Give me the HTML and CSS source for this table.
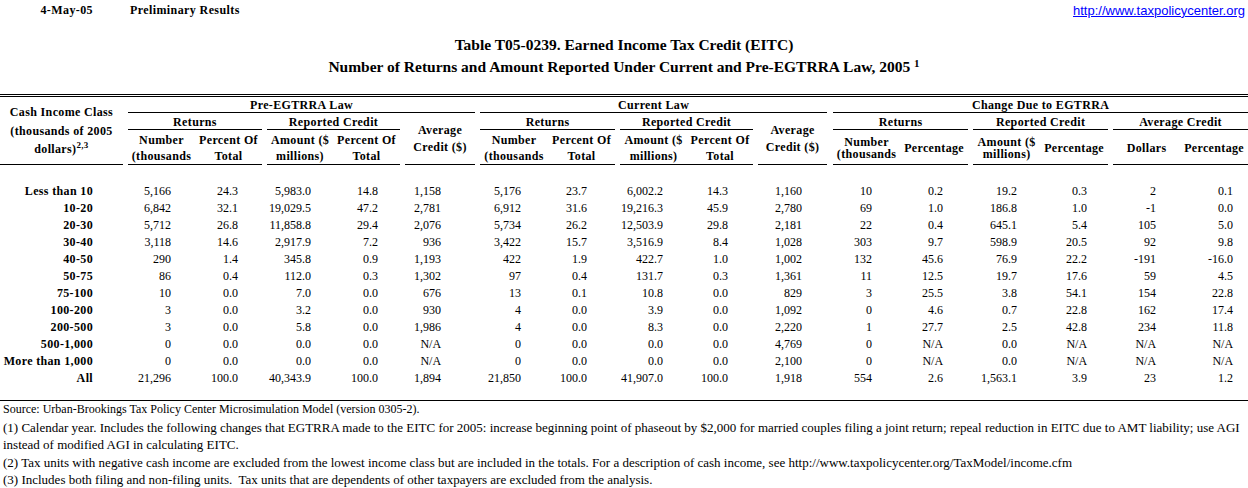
FILE: index.html
```html
<!DOCTYPE html>
<html lang="en">
<head>
<meta charset="utf-8">
<title>Table T05-0239. Earned Income Tax Credit (EITC)</title>
<link rel="stylesheet" href="styles.css">
</head>
<body>
<div class="topbar">
  <span class="date">4-May-05</span>
  <span class="status">Preliminary Results</span>
  <a class="site" href="#">http://www.taxpolicycenter.org</a>
</div>
<div class="title">
  <div>Table T05-0239. Earned Income Tax Credit (EITC)</div>
  <div>Number of Returns and Amount Reported Under Current and Pre-EGTRRA Law, 2005 <sup>1</sup></div>
</div>
<div class="table-wrap">
<table class="data">
  <colgroup>
    <col class="c-a"><col class="c-b"><col class="c-c"><col class="c-d"><col class="c-e"><col class="c-f">
    <col class="c-g"><col class="c-h"><col class="c-i"><col class="c-j"><col class="c-k">
    <col class="c-l"><col class="c-m"><col class="c-n"><col class="c-o"><col class="c-p"><col class="c-q">
  </colgroup>
  <thead>
    <tr class="hr1">
      <th rowspan="3" class="ul label-head">Cash Income Class<br>(thousands of 2005<br>dollars)<sup>2,3</sup></th>
      <th colspan="5" class="ul gap">Pre-EGTRRA Law</th>
      <th colspan="5" class="ul gap">Current Law</th>
      <th colspan="6" class="ul gap6">Change Due to EGTRRA</th>
    </tr>
    <tr class="hr2">
      <th colspan="2" class="ul gap">Returns</th>
      <th colspan="2" class="ul gap">Reported Credit</th>
      <th rowspan="2" class="ul gap avg">Average<br>Credit ($)</th>
      <th colspan="2" class="ul gap">Returns</th>
      <th colspan="2" class="ul gap">Reported Credit</th>
      <th rowspan="2" class="ul gap avg">Average<br>Credit ($)</th>
      <th colspan="2" class="ul gap6">Returns</th>
      <th colspan="2" class="ul gap">Reported Credit</th>
      <th colspan="2" class="ul gap">Average Credit</th>
    </tr>
    <tr class="hr3">
      <th class="ul gap">Number<br>(thousands</th>
      <th class="ul">Percent Of<br>Total</th>
      <th class="ul gap">Amount ($<br>millions)</th>
      <th class="ul">Percent Of<br>Total</th>
      <th class="ul gap">Number<br>(thousands</th>
      <th class="ul">Percent Of<br>Total</th>
      <th class="ul gap">Amount ($<br>millions)</th>
      <th class="ul">Percent Of<br>Total</th>
      <th class="ul gap6 tight">Number<br>(thousands</th>
      <th class="ul tight">Percentage</th>
      <th class="ul gap tight">Amount ($<br>millions)</th>
      <th class="ul tight">Percentage</th>
      <th class="ul gap tight">Dollars</th>
      <th class="ul tight">Percentage</th>
    </tr>
  </thead>
  <tbody>
    <tr class="blank"><td colspan="17"></td></tr>
    <tr><th>Less than 10</th><td>5,166</td><td>24.3</td><td>5,983.0</td><td>14.8</td><td>1,158</td><td>5,176</td><td>23.7</td><td>6,002.2</td><td>14.3</td><td>1,160</td><td>10</td><td>0.2</td><td>19.2</td><td>0.3</td><td>2</td><td>0.1</td></tr>
    <tr><th>10-20</th><td>6,842</td><td>32.1</td><td>19,029.5</td><td>47.2</td><td>2,781</td><td>6,912</td><td>31.6</td><td>19,216.3</td><td>45.9</td><td>2,780</td><td>69</td><td>1.0</td><td>186.8</td><td>1.0</td><td>-1</td><td>0.0</td></tr>
    <tr><th>20-30</th><td>5,712</td><td>26.8</td><td>11,858.8</td><td>29.4</td><td>2,076</td><td>5,734</td><td>26.2</td><td>12,503.9</td><td>29.8</td><td>2,181</td><td>22</td><td>0.4</td><td>645.1</td><td>5.4</td><td>105</td><td>5.0</td></tr>
    <tr><th>30-40</th><td>3,118</td><td>14.6</td><td>2,917.9</td><td>7.2</td><td>936</td><td>3,422</td><td>15.7</td><td>3,516.9</td><td>8.4</td><td>1,028</td><td>303</td><td>9.7</td><td>598.9</td><td>20.5</td><td>92</td><td>9.8</td></tr>
    <tr><th>40-50</th><td>290</td><td>1.4</td><td>345.8</td><td>0.9</td><td>1,193</td><td>422</td><td>1.9</td><td>422.7</td><td>1.0</td><td>1,002</td><td>132</td><td>45.6</td><td>76.9</td><td>22.2</td><td>-191</td><td>-16.0</td></tr>
    <tr><th>50-75</th><td>86</td><td>0.4</td><td>112.0</td><td>0.3</td><td>1,302</td><td>97</td><td>0.4</td><td>131.7</td><td>0.3</td><td>1,361</td><td>11</td><td>12.5</td><td>19.7</td><td>17.6</td><td>59</td><td>4.5</td></tr>
    <tr><th>75-100</th><td>10</td><td>0.0</td><td>7.0</td><td>0.0</td><td>676</td><td>13</td><td>0.1</td><td>10.8</td><td>0.0</td><td>829</td><td>3</td><td>25.5</td><td>3.8</td><td>54.1</td><td>154</td><td>22.8</td></tr>
    <tr><th>100-200</th><td>3</td><td>0.0</td><td>3.2</td><td>0.0</td><td>930</td><td>4</td><td>0.0</td><td>3.9</td><td>0.0</td><td>1,092</td><td>0</td><td>4.6</td><td>0.7</td><td>22.8</td><td>162</td><td>17.4</td></tr>
    <tr><th>200-500</th><td>3</td><td>0.0</td><td>5.8</td><td>0.0</td><td>1,986</td><td>4</td><td>0.0</td><td>8.3</td><td>0.0</td><td>2,220</td><td>1</td><td>27.7</td><td>2.5</td><td>42.8</td><td>234</td><td>11.8</td></tr>
    <tr><th>500-1,000</th><td>0</td><td>0.0</td><td>0.0</td><td>0.0</td><td>N/A</td><td>0</td><td>0.0</td><td>0.0</td><td>0.0</td><td>4,769</td><td>0</td><td>N/A</td><td>0.0</td><td>N/A</td><td>N/A</td><td>N/A</td></tr>
    <tr><th>More than 1,000</th><td>0</td><td>0.0</td><td>0.0</td><td>0.0</td><td>N/A</td><td>0</td><td>0.0</td><td>0.0</td><td>0.0</td><td>2,100</td><td>0</td><td>N/A</td><td>0.0</td><td>N/A</td><td>N/A</td><td>N/A</td></tr>
    <tr><th>All</th><td>21,296</td><td>100.0</td><td>40,343.9</td><td>100.0</td><td>1,894</td><td>21,850</td><td>100.0</td><td>41,907.0</td><td>100.0</td><td>1,918</td><td>554</td><td>2.6</td><td>1,563.1</td><td>3.9</td><td>23</td><td>1.2</td></tr>
  </tbody>
</table>
</div>
<div class="notes">
  <p class="source">Source: Urban-Brookings Tax Policy Center Microsimulation Model (version 0305-2).</p>
  <p>(1) Calendar year. Includes the following changes that EGTRRA made to the EITC for 2005: increase beginning point of phaseout by $2,000 for married couples filing a joint return; repeal reduction in EITC due to AMT liability; use AGI<br>instead of modified AGI in calculating EITC.</p>
  <p>(2) Tax units with negative cash income are excluded from the lowest income class but are included in the totals. For a description of cash income, see http://www.taxpolicycenter.org/TaxModel/income.cfm</p>
  <p>(3) Includes both filing and non-filing units.&nbsp; Tax units that are dependents of other taxpayers are excluded from the analysis.</p>
</div>
</body>
</html>
```
FILE: styles.css
```css
body {
  margin: 0;
  background: #fff;
  color: #000;
  font-family: "Liberation Serif", "Times New Roman", serif;
  font-size: 12px;
}

.topbar {
  display: flex;
  align-items: center;
  height: 20px;
  font-weight: bold;
  letter-spacing: 0.4px;
}
.topbar .date {
  width: 93px;
  text-align: right;
}
.topbar .status {
  margin-left: 37px;
}
.topbar .site {
  margin-left: auto;
  margin-right: 3px;
  font-family: "Liberation Sans", Arial, sans-serif;
  font-weight: normal;
  font-size: 13px;
  letter-spacing: 0;
  color: #0000ff;
  text-decoration: underline;
}

.title {
  padding-top: 14px;
  text-align: center;
  font-weight: bold;
  font-size: 15.5px;
  line-height: 22px;
}
.title sup {
  font-size: 11px;
  line-height: 0;
  vertical-align: 5px;
}

.table-wrap {
  margin-top: 16px;
  border-top: 3px double #000;
}

.data {
  width: 1248px;
  table-layout: fixed;
  border-collapse: collapse;
}
.data th,
.data td {
  padding: 0;
  white-space: nowrap;
}
.data th {
  letter-spacing: 0.35px;
}
.c-a { width: 123px; }
.c-b { width: 72px; }
.c-c { width: 67px; }
.c-d { width: 71px; }
.c-e { width: 67px; }
.c-f { width: 75px; }
.c-g { width: 73px; }
.c-h { width: 67px; }
.c-i { width: 72px; }
.c-j { width: 66px; }
.c-k { width: 74px; }
.c-l { width: 73px; }
.c-m { width: 68px; }
.c-n { width: 72px; }
.c-o { width: 68px; }
.c-p { width: 72px; }
.c-q { width: 68px; }

.data thead th {
  font-weight: bold;
  text-align: center;
  vertical-align: middle;
}
.data .ul {
  background: linear-gradient(#000, #000) right bottom / calc(100% - var(--gap, 0px)) 1px no-repeat;
}
.data .gap {
  --gap: 5px;
  padding-left: 5px;
}
.data .gap6 {
  --gap: 6px;
  padding-left: 6px;
}
.hr1 th {
  height: 16px;
  line-height: 15px;
}
.hr2 th {
  height: 17px;
  line-height: 16px;
}
.hr3 th {
  height: 35px;
  line-height: 16px;
}
.hr3 th.tight {
  line-height: 12px;
}
.data th.label-head {
  line-height: 18.5px;
}
.data th.avg {
  line-height: 17px;
}
.label-head sup {
  font-size: 9px;
  line-height: 0;
  vertical-align: 5px;
}

.data tbody tr.blank td {
  height: 18px;
}
.data tbody th {
  height: 17px;
  line-height: 17px;
  text-align: right;
  padding-right: 30px;
  font-weight: bold;
}
.data tbody td {
  line-height: 17px;
  text-align: right;
}
.data tbody td:nth-child(2) { padding-right: 24px; }
.data tbody td:nth-child(3) { padding-right: 24px; }
.data tbody td:nth-child(4) { padding-right: 22px; }
.data tbody td:nth-child(5) { padding-right: 22px; }
.data tbody td:nth-child(6) { padding-right: 34px; }
.data tbody td:nth-child(7) { padding-right: 27px; }
.data tbody td:nth-child(8) { padding-right: 28px; }
.data tbody td:nth-child(9) { padding-right: 24px; }
.data tbody td:nth-child(10) { padding-right: 25px; }
.data tbody td:nth-child(11) { padding-right: 25px; }
.data tbody td:nth-child(12) { padding-right: 28px; }
.data tbody td:nth-child(13) { padding-right: 25px; }
.data tbody td:nth-child(14) { padding-right: 23px; }
.data tbody td:nth-child(15) { padding-right: 21px; }
.data tbody td:nth-child(16) { padding-right: 24px; }
.data tbody td:nth-child(17) { padding-right: 15px; }

.notes {
  margin-top: 13px;
  border-top: 1px solid #000;
  padding: 0 3px;
  font-size: 13px;
  line-height: 17.5px;
}
.notes p {
  margin: 0;
  white-space: nowrap;
}
.notes p.source {
  font-size: 12px;
}
```
